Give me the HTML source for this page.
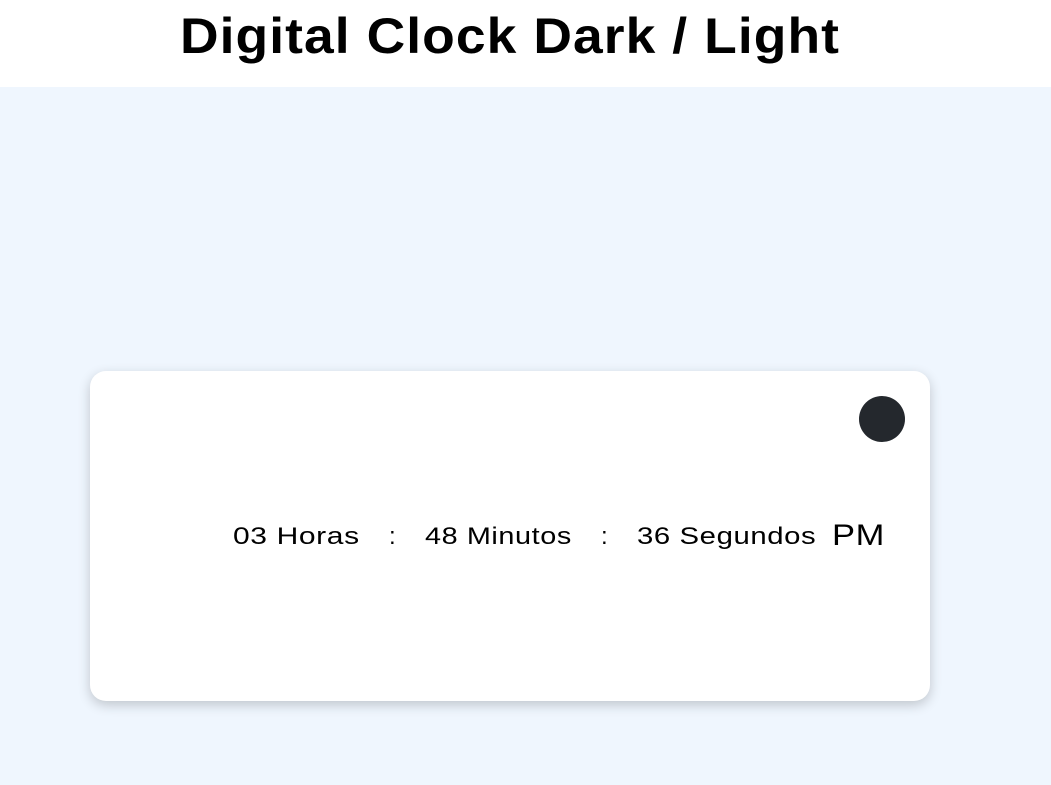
<!DOCTYPE html>
<html><head><style>
html,body{margin:0;padding:0;width:1051px;height:785px;overflow:hidden;background:#eff6fe;font-family:"Liberation Sans",sans-serif;}
.hdr{position:absolute;left:0;top:0;width:1051px;height:87px;background:#fff;}
.title{position:absolute;left:180px;top:8px;width:660px;font-size:50px;font-weight:bold;line-height:56px;color:#000;letter-spacing:1px;white-space:nowrap;transform-origin:0 0;}
.card{position:absolute;left:90px;top:371px;width:840px;height:330px;background:#fff;border-radius:16px;box-shadow:0 4px 12px rgba(0,0,0,0.2);}
.dot{position:absolute;left:859px;top:396px;width:46px;height:46px;border-radius:50%;background:#24282d;}
.t{position:absolute;top:522px;font-size:24px;line-height:30px;color:#000;white-space:nowrap;letter-spacing:0.5px;transform-origin:0 50%;}
</style></head><body>
<div class="hdr"><div class="title" id="ti">Digital Clock Dark / Light</div></div>
<div class="card"></div>
<div class="dot"></div>
<div class="t" style="left:233px;transform:scaleX(1.25)">03 Horas</div>
<div class="t" style="left:389px">:</div>
<div class="t" style="left:425px;transform:scaleX(1.2)">48 Minutos</div>
<div class="t" style="left:601px">:</div>
<div class="t" style="left:637px;transform:scaleX(1.22)">36 Segundos</div>
<div class="t" style="left:832px;top:518px;font-size:30px;line-height:36px;transform:scaleX(1.15)">PM</div>
<script>
var t=document.getElementById('ti');t.style.width='auto';var r=t.getBoundingClientRect().width;t.style.transform='scaleX('+(660/r)+')';
</script>
</body></html>
